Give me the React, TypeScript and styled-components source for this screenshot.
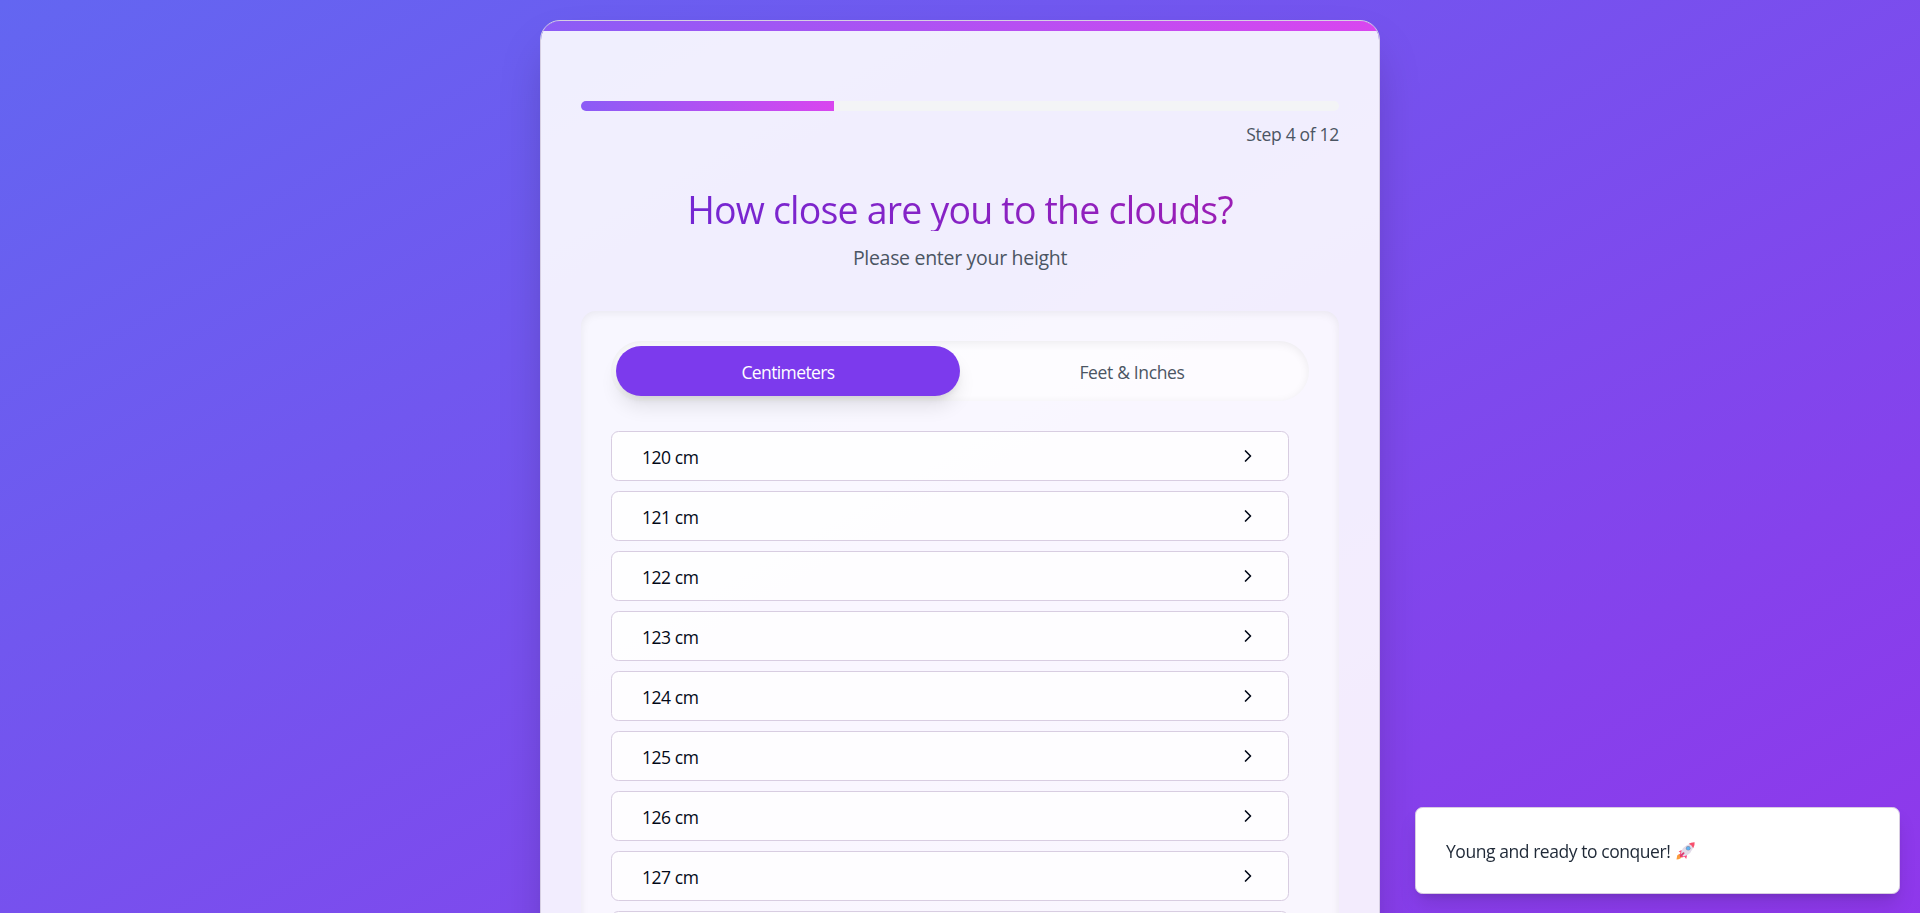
import React, { useState } from "react";
import styled, { createGlobalStyle } from "styled-components";

const GlobalStyle = createGlobalStyle`
  * { box-sizing: border-box; }
  html { font-size: 20px; }
  body {
    margin: 0;
    height: 100vh;
    overflow: hidden;
    font-family: "Segoe UI", "Open Sans", "Noto Sans", sans-serif;
    color: #020817;
  }
  h1, p { margin: 0; font-weight: 400; }
  button { font-family: inherit; cursor: pointer; }
`;

const Viewport = styled.div`
  height: 100vh;
  overflow: hidden;
`;

const Page = styled.div`
  height: 1110px;
  overflow: hidden;
  display: flex;
  justify-content: center;
  align-items: flex-start;
  padding: 20px;
  background: linear-gradient(to bottom right, #6366f1, #9333ea);
`;

const Card = styled.main`
  width: 840px;
  min-height: 1070px;
  flex: none;
  overflow: hidden;
  border: 1px solid #d6cfe2;
  border-radius: 20px;
  background: rgba(255, 255, 255, 0.9);
  background-clip: padding-box;
  box-shadow: 0 25px 50px -12px rgba(0, 0, 0, 0.25);
`;

const Accent = styled.div`
  height: 10px;
  background: linear-gradient(to right, #8b5cf6, #d946ef);
`;

const Content = styled.div`
  padding: 70px 40px 40px;
`;

const Track = styled.div`
  height: 10px;
  border-radius: 5px;
  overflow: hidden;
  background: #f3f4f6;
`;

const Fill = styled.div`
  height: 100%;
  background: linear-gradient(to right, #8b5cf6, #d946ef);
`;

const StepLabel = styled.p`
  margin-top: 11px;
  text-align: right;
  font-size: 17.5px;
  line-height: 25px;
  letter-spacing: -0.31px;
  color: #4b5563;
`;

const Title = styled.h1`
  margin-top: 46px;
  padding-bottom: 5px;
  text-align: center;
  font-size: 37.5px;
  line-height: 33px;
  letter-spacing: -0.81px;
  color: transparent;
  background: linear-gradient(to right, #6d28d9, #a21caf);
  background-clip: text;
  -webkit-background-clip: text;
`;

const Subtitle = styled.p`
  margin-top: 12px;
  text-align: center;
  font-size: 19.5px;
  line-height: 30px;
  letter-spacing: -0.3px;
  color: #4b5563;
`;

const Panel = styled.section`
  margin-top: 38px;
  padding: 30px;
  min-height: 720px;
  border-radius: 15px;
  background: rgba(255, 255, 255, 0.5);
  box-shadow: inset 0 2px 10px rgba(0, 0, 0, 0.065);
`;

const Tabs = styled.div`
  display: flex;
  padding: 5px;
  border-radius: 30px;
  background: rgba(255, 255, 255, 0.6);
  box-shadow: inset 0 2px 10px rgba(0, 0, 0, 0.07);
`;

const Tab = styled.button<{ $active: boolean }>`
  flex: 1;
  height: 50px;
  padding: 1px 0 0;
  border: 0;
  border-radius: 25px;
  font-size: 17.5px;
  letter-spacing: ${(p) => (p.$active ? "-0.6px" : "-0.35px")};
  color: ${(p) => (p.$active ? "#fff" : "#4b5563")};
  background: ${(p) => (p.$active ? "#7c3aed" : "transparent")};
  box-shadow: ${(p) =>
    p.$active
      ? "0 12px 20px -3px rgba(0, 0, 0, 0.11), 0 5px 8px -4px rgba(0, 0, 0, 0.12)"
      : "none"};
`;

const List = styled.div`
  display: flex;
  flex-direction: column;
  gap: 10px;
  margin-top: 30px;
  padding-right: 20px;
`;

const Option = styled.button`
  display: flex;
  align-items: center;
  justify-content: space-between;
  height: 50px;
  padding: 0 30px;
  border: 1px solid #d8cde1;
  border-radius: 7.5px;
  background: rgba(255, 255, 255, 0.8);
  background-clip: padding-box;
  font-size: 17.5px;
  letter-spacing: -0.45px;
  color: #020817;
`;

const OptionText = styled.span`
  padding-top: 2px;
`;

const Chevron = styled.svg`
  width: 20px;
  height: 20px;
  fill: none;
  stroke: currentColor;
  stroke-width: 2;
  stroke-linecap: round;
  stroke-linejoin: round;
`;

const Toast = styled.aside`
  position: fixed;
  right: 20px;
  bottom: 19px;
  width: 485px;
  height: 87px;
  display: flex;
  align-items: center;
  gap: 6px;
  padding: 0 30px;
  border: 1px solid #d8cde1;
  border-radius: 7.5px;
  background: #fff;
  box-shadow: 0 12px 20px -3px rgba(0, 0, 0, 0.12), 0 5px 8px -4px rgba(0, 0, 0, 0.12);
  font-size: 17.5px;
  letter-spacing: -0.44px;
  color: #1f2937;
`;

const RocketSvg = styled.svg`
  width: 19px;
  height: 18px;
`;

const Rocket = () => (
  <RocketSvg viewBox="0 0 19 18">
    <path d="M.5 17.5 L1.2 13.5 Q3 11 5.3 12.5 L6.5 14 Q5 17.3 .5 17.5Z" fill="#fb9b3c" />
    <path d="M2.6 9.8 Q5 7.8 8 8.5 L10.5 11 Q11.5 14 10.2 17 L8.5 14.8 L6 15.6 L3.3 13 L4.6 10.6Z" fill="#fb4a7c" />
    <path d="M5 12.6 Q4.6 4.5 16 1 L18 2.8 Q15.6 13.4 7.4 14.4Z" fill="#e2dbe8" />
    <path d="M12.8 1.8 Q15 .2 18.6 .3 Q19 3.5 17.2 6.2 Q16 3 12.8 1.8Z" fill="#f8506d" />
    <path d="M4.8 14 L7.6 11.2" stroke="#dc3b70" strokeWidth="1.8" strokeLinecap="round" />
    <circle cx="12.2" cy="6.3" r="2.3" fill="#8093b5" />
    <circle cx="12.2" cy="6.3" r="1.6" fill="#5cb5f5" />
  </RocketSvg>
);

const UNITS = ["Centimeters", "Feet & Inches"];
const HEIGHTS = Array.from({ length: 8 }, (_, i) => 120 + i);
const STEP = 4;
const TOTAL_STEPS = 12;

export default function App() {
  const [unit, setUnit] = useState(UNITS[0]);
  return (
    <>
      <GlobalStyle />
      <Viewport>
        <Page>
          <Card>
            <Accent />
            <Content>
              <Track>
                <Fill style={{ width: `${(STEP / TOTAL_STEPS) * 100}%` }} />
              </Track>
              <StepLabel>{`Step ${STEP} of ${TOTAL_STEPS}`}</StepLabel>
              <Title>How close are you to the clouds?</Title>
              <Subtitle>Please enter your height</Subtitle>
              <Panel>
                <Tabs>
                  {UNITS.map((name) => (
                    <Tab key={name} $active={name === unit} onClick={() => setUnit(name)}>
                      {name}
                    </Tab>
                  ))}
                </Tabs>
                <List>
                  {HEIGHTS.map((cm) => (
                    <Option key={cm}>
                      <OptionText>{`${cm} cm`}</OptionText>
                      <Chevron viewBox="0 0 24 24">
                        <path d="m9 18 6-6-6-6" />
                      </Chevron>
                    </Option>
                  ))}
                  <Option aria-hidden="true" />
                </List>
              </Panel>
            </Content>
          </Card>
        </Page>
      </Viewport>
      <Toast role="status">
        <span>Young and ready to conquer!</span>
        <Rocket />
      </Toast>
    </>
  );
}
